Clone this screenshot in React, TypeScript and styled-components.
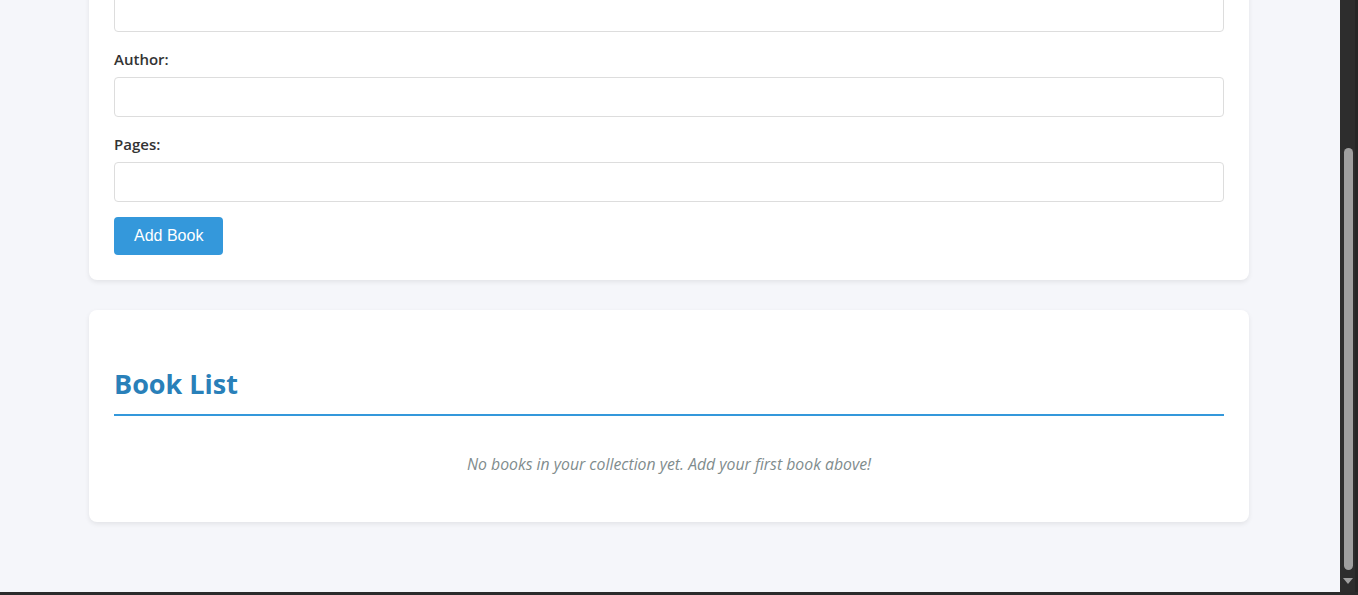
import React from 'react';
import styled, { createGlobalStyle } from 'styled-components';

const GlobalStyle = createGlobalStyle`
  html, body {
    margin: 0;
    padding: 0;
    height: 100%;
    overflow: hidden;
  }

  body {
    font-family: "Open Sans", "Noto Sans", sans-serif;
    color: #333;
  }

  * {
    box-sizing: border-box;
  }
`;

const Frame = styled.div`
  display: flex;
  flex-flow: column nowrap;
  height: 100vh;
  background: #2b2b2b;
`;

const Viewport = styled.div`
  display: flex;
  flex-flow: row nowrap;
  flex: 1;
  min-height: 0;
`;

const Page = styled.main`
  flex: 1;
  min-width: 0;
  overflow: hidden;
  display: flex;
  flex-flow: column nowrap;
  justify-content: flex-end;
  background: #f5f6fa;
`;

const Container = styled.div`
  width: 1160px;
  margin: 0 auto 0 89px;
  padding-bottom: 70px;
  display: flex;
  flex-flow: column nowrap;
  gap: 30px;
`;

const Card = styled.section`
  background: #fff;
  border-radius: 8px;
  box-shadow: 0 2px 5px rgba(0, 0, 0, 0.08);
  padding: 25px;
`;

const Heading = styled.h2`
  margin: 0 0 20px;
  padding-bottom: 10px;
  border-bottom: 2px solid #3498db;
  color: #2980b9;
  font-size: 27px;
  font-weight: 700;
  line-height: 34px;
`;

const ListHeading = styled(Heading)`
  margin-top: 32px;
  margin-bottom: 18px;
  padding-bottom: 13px;
`;

const FormGroup = styled.div`
  margin-bottom: 15px;
`;

const Label = styled.label`
  display: block;
  margin-bottom: 6px;
  font-size: 15px;
  line-height: 24px;
  font-weight: 600;
  color: #333;
`;

const Input = styled.input`
  display: block;
  width: 100%;
  height: 40px;
  padding: 10px;
  border: 1px solid #ddd;
  border-radius: 4px;
  font-size: 15px;
  background: #fff;
`;

const Button = styled.button`
  padding: 10px 20px;
  border: none;
  border-radius: 4px;
  background: #3498db;
  color: #fff;
  font-family: "Liberation Sans", Arial, sans-serif;
  font-size: 16px;
  cursor: pointer;
`;

const EmptyMessage = styled.p`
  margin: 0;
  padding: 20px 0 23px;
  text-align: center;
  font-style: italic;
  font-size: 15.8px;
  line-height: 20px;
  color: #7f8c8d;
`;

const Scrollbar = styled.div`
  width: 18px;
  display: flex;
  flex-flow: column nowrap;
  align-items: center;
  padding: 148px 0 8px;
  border-right: 3px solid #262626;
  background: #2d2d2d;
`;

const Thumb = styled.div`
  width: 9px;
  flex: 1;
  margin-right: -1px;
  border-radius: 5px;
  background: #9f9f9f;
`;

const Arrow = styled.div`
  margin-top: 8px;
  width: 0;
  height: 0;
  border-left: 5px solid transparent;
  border-right: 5px solid transparent;
  border-top: 6px solid #9f9f9f;
`;

const BottomEdge = styled.div`
  height: 3px;
  background: #2b2b2b;
`;

const fields = ['Title', 'Author', 'Pages'];

export default function App() {
  return (
    <>
      <GlobalStyle />
      <Frame>
        <Viewport>
          <Page>
            <Container>
              <Card>
                <Heading>Add New Book</Heading>
                {fields.map((name) => (
                  <FormGroup key={name}>
                    <Label htmlFor={name.toLowerCase()}>{name}:</Label>
                    <Input id={name.toLowerCase()} type={name === 'Pages' ? 'number' : 'text'} />
                  </FormGroup>
                ))}
                <Button type="button">Add Book</Button>
              </Card>
              <Card>
                <ListHeading>Book List</ListHeading>
                <EmptyMessage>No books in your collection yet. Add your first book above!</EmptyMessage>
              </Card>
            </Container>
          </Page>
          <Scrollbar>
            <Thumb />
            <Arrow />
          </Scrollbar>
        </Viewport>
        <BottomEdge />
      </Frame>
    </>
  );
}
